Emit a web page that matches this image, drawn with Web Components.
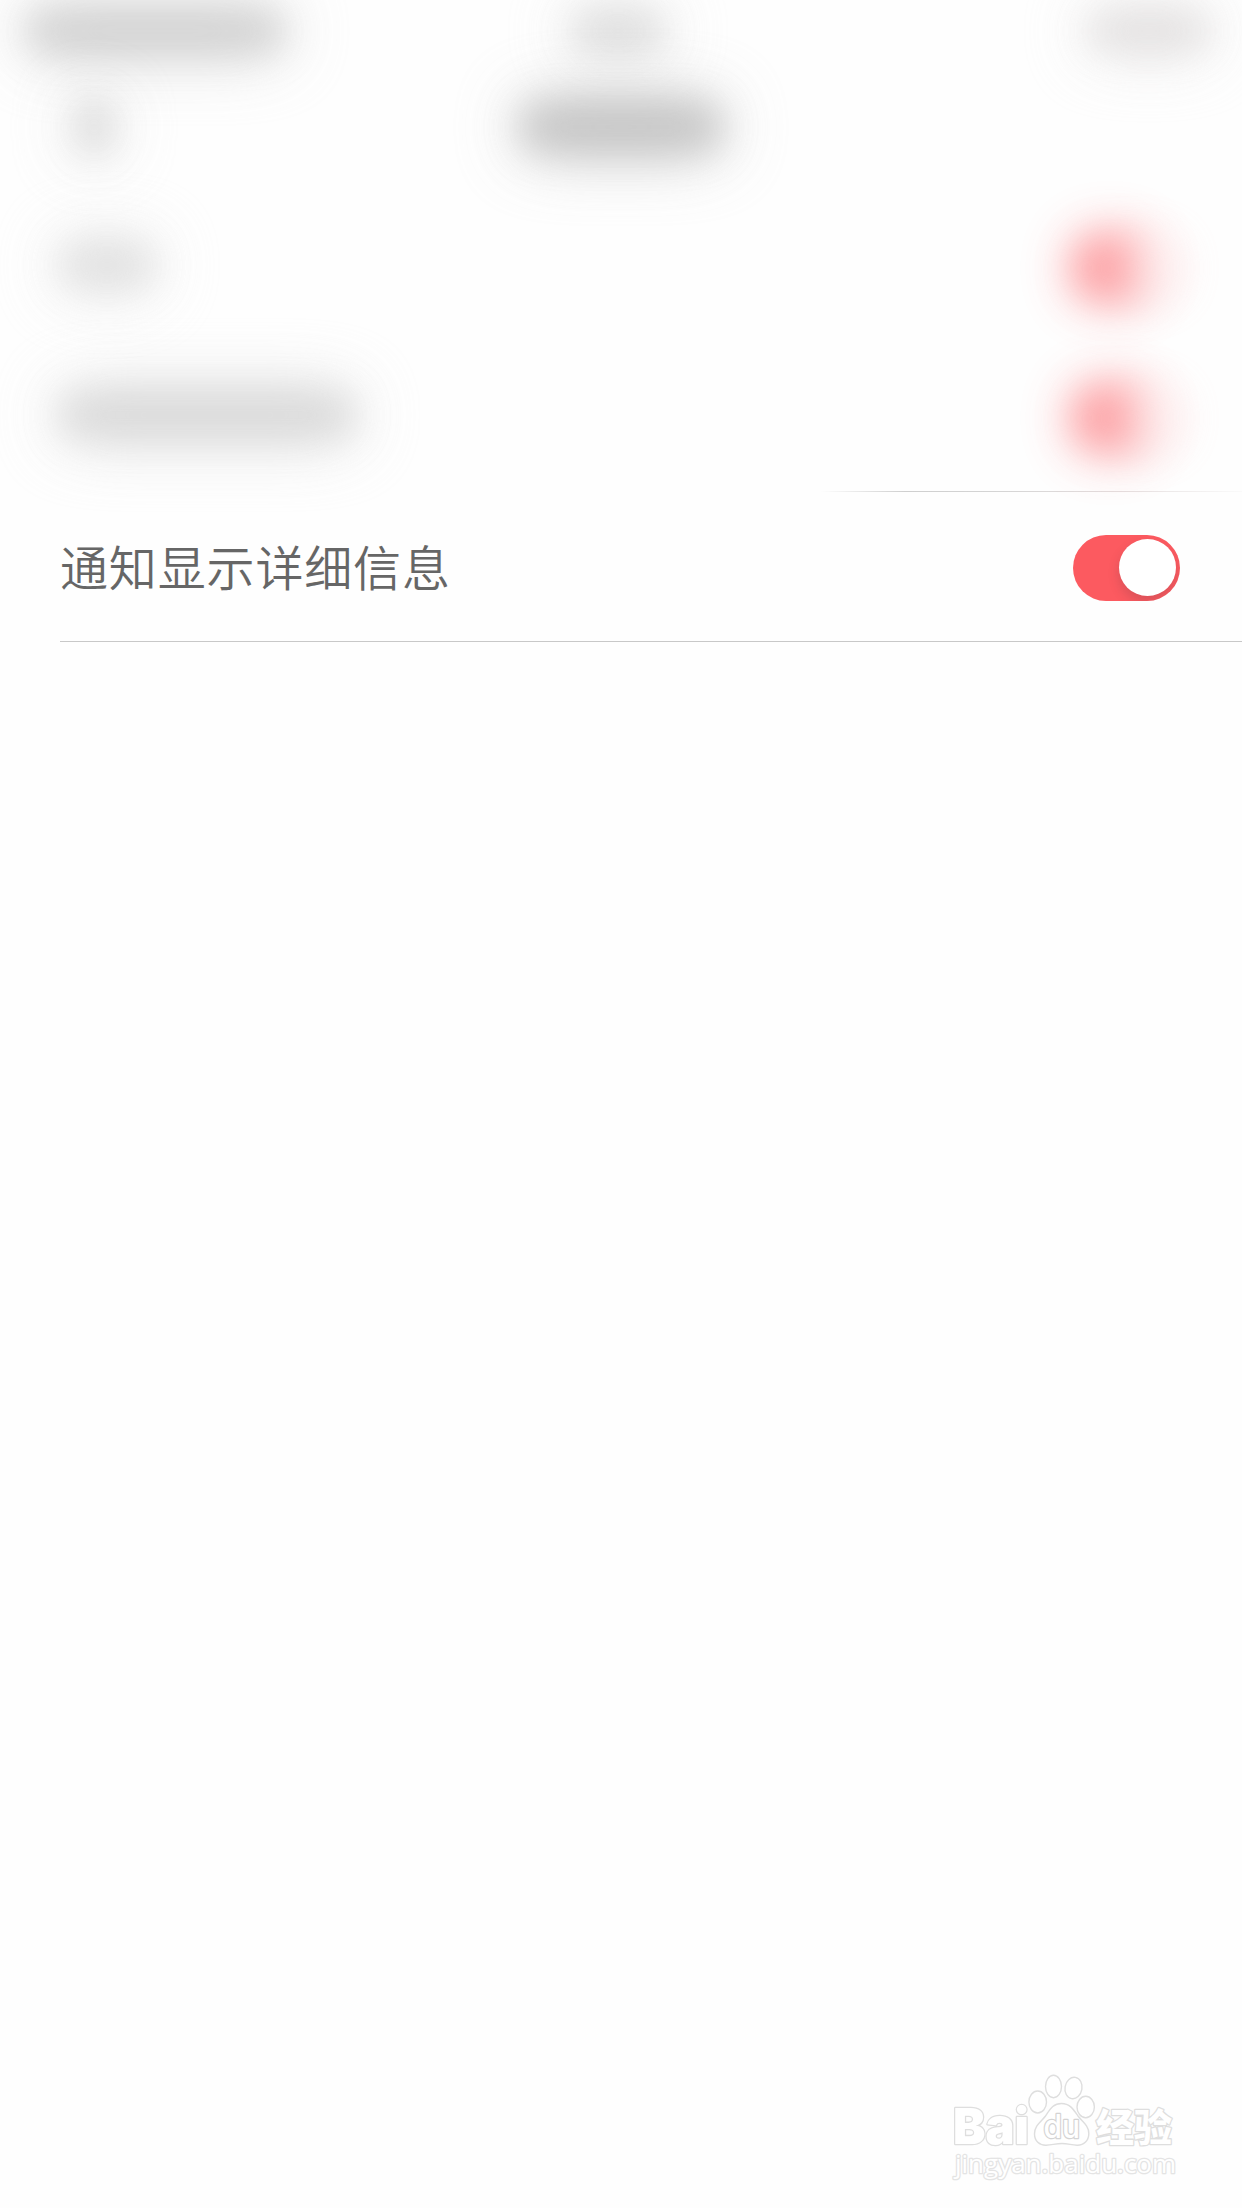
<!DOCTYPE html>
<html lang="zh-CN">
<head>
<meta charset="UTF-8">
<title>通知显示详细信息</title>
<style>
    body {
        margin: 0;
        background: #fefefe;
        font-family: "Noto Sans CJK SC", sans-serif;
    }
</style>
</head>
<body>
<settings-page></settings-page>

<script>
// Soft placeholder for content that is out of focus
class BlurBlock extends HTMLElement {
    constructor() {
        super();
        this.attachShadow({ mode: 'open' });
    }

    connectedCallback() {
        const width = this.getAttribute('width');
        const height = this.getAttribute('height');
        const color = this.getAttribute('color');

        this.shadowRoot.innerHTML = `
            <style>
                :host {
                    display: grid;
                    flex: none;
                    width: ${width}px;
                    height: ${height}px;
                }

                div {
                    grid-area: 1 / 1;
                    border-radius: 20px;
                    background: ${color};
                    filter: blur(18px);
                    opacity: 0.62;
                }

                .halo {
                    filter: blur(34px);
                    opacity: 0.8;
                }
            </style>
            <div class="halo"></div>
            <div></div>
        `;
    }
}

class ToggleSwitch extends HTMLElement {
    constructor() {
        super();
        this.attachShadow({ mode: 'open' });
    }

    connectedCallback() {
        this.shadowRoot.innerHTML = `
            <style>
                :host {
                    display: grid;
                    flex: none;
                    padding-top: 2px;
                }

                .track {
                    grid-area: 1 / 1;
                    box-sizing: border-box;
                    width: 107px;
                    height: 66px;
                    padding: 4.5px 4px;
                    border-radius: 33px;
                    background: #fc5a60;
                    overflow: hidden;
                    display: flex;
                    justify-content: flex-end;
                }

                .knob {
                    width: 57px;
                    height: 57px;
                    border-radius: 50%;
                    background: #fff;
                    box-shadow: 0 6px 12px rgba(80, 50, 60, 0.2);
                }

                .halo {
                    grid-area: 1 / 1;
                    display: none;
                }

                :host([blurred]) .track {
                    filter: blur(20px);
                    opacity: 0.42;
                }

                :host([blurred]) .halo {
                    display: block;
                    width: 74px;
                    height: 66px;
                    border-radius: 33px;
                    background: #fc5a60;
                    filter: blur(28px);
                    opacity: 0.46;
                }
            </style>
            <div class="track"><div class="knob"></div></div>
            <div class="halo"></div>
        `;
    }
}

class StatusBar extends HTMLElement {
    constructor() {
        super();
        this.attachShadow({ mode: 'open' });
        this.shadowRoot.innerHTML = `
            <style>
                :host {
                    display: grid;
                    grid-template-columns: 1fr auto 1fr;
                    align-items: center;
                    height: 62px;
                    padding: 0 32px 0 26px;
                }

                .end {
                    justify-self: end;
                }
            </style>
            <blur-block width="258" height="40" color="#c4c4c4"></blur-block>
            <blur-block width="92" height="34" color="#d0d0d0"></blur-block>
            <blur-block class="end" width="122" height="34" color="#d9d6d6"></blur-block>
        `;
    }
}

class NavBar extends HTMLElement {
    constructor() {
        super();
        this.attachShadow({ mode: 'open' });
        this.shadowRoot.innerHTML = `
            <style>
                :host {
                    display: grid;
                    grid-template-columns: 1fr auto 1fr;
                    align-items: center;
                    height: 130px;
                    padding: 0 80px;
                }
            </style>
            <blur-block width="28" height="54" color="#c4c4c4"></blur-block>
            <blur-block width="200" height="48" color="#b8b8b8"></blur-block>
        `;
    }
}

class SettingsRow extends HTMLElement {
    constructor() {
        super();
        this.attachShadow({ mode: 'open' });
        this.shadowRoot.innerHTML = `
            <style>
                :host {
                    display: block;
                    height: 150px;
                    padding-left: 60px;
                }

                .row {
                    box-sizing: border-box;
                    height: 150px;
                    padding-right: 62px;
                    display: flex;
                    align-items: center;
                    justify-content: space-between;
                    color: #666;
                    font-size: 48px;
                    font-weight: 350;
                    letter-spacing: 0.85px;
                    line-height: 70px;
                    border-bottom: 1px solid transparent;
                }

                .label {
                    padding-bottom: 4px;
                }

                :host([line="full"]) .row {
                    border-bottom-color: #c8c8c8;
                }

                :host([line="part"]) .row {
                    background: linear-gradient(90deg, transparent 760px, #cfcfcf 845px, #d4d4d4 930px, #e4dede 1060px, #fafafa 1182px) 0 100% / 100% 1px no-repeat border-box;
                }
            </style>
            <div class="row">
                <div class="label"><slot></slot></div>
                <slot name="control"></slot>
            </div>
        `;
    }
}

class JingyanMark extends HTMLElement {
    constructor() {
        super();
        this.attachShadow({ mode: 'open' });
        this.shadowRoot.innerHTML = `
            <style>
                :host {
                    position: absolute;
                    left: 930px;
                    top: 2050px;
                }

                svg {
                    display: block;
                    fill: #fff;
                    stroke: #dedede;
                    stroke-width: 1.4;
                }

                text {
                    paint-order: stroke;
                    stroke-width: 2.6;
                    stroke-linejoin: round;
                }

                .brand {
                    font: 900 50px Inter, sans-serif;
                }

                .du {
                    font: 500 32px Inter, sans-serif;
                    stroke: #d4d4d4;
                }

                .name {
                    font: 900 38px "Noto Sans CJK SC", sans-serif;
                }

                .url {
                    font: 400 26px "Open Sans", sans-serif;
                    stroke: #e4e4e4;
                }
            </style>
            <svg width="270" height="158" viewBox="0 0 270 158">
                <ellipse cx="107.700" cy="52" rx="8.800" ry="11"/>
                <ellipse cx="123.500" cy="36.500" rx="8" ry="11.200"/>
                <ellipse cx="143.500" cy="38" rx="8.500" ry="10.800" transform="rotate(10 143.500 38)"/>
                <ellipse cx="155.700" cy="57" rx="8.700" ry="10.700"/>
                <path d="M131.500 53.500C123 53.500 120 59.500 115.500 66C111.500 71.500 104.500 75 104.500 84C104.500 91 109.500 95.500 116 95.300C122 95 126 93.500 132 93.500C138 93.500 141 95 147 95.300C154 95.500 158.800 90.500 158.800 83.500C158.800 75 152 71.500 148 66C143.500 59.500 140 53.500 131.500 53.500Z"/>
                <text class="brand" x="23" y="93.500" textLength="76" lengthAdjust="spacingAndGlyphs">Bai</text>
                <text class="du" x="113.500" y="88" textLength="36.500" lengthAdjust="spacingAndGlyphs">du</text>
                <text class="name" x="166" y="91" textLength="76" lengthAdjust="spacingAndGlyphs">经验</text>
                <text class="url" x="25" y="123" textLength="221" lengthAdjust="spacingAndGlyphs">jingyan.baidu.com</text>
            </svg>
        `;
    }
}

class SettingsPage extends HTMLElement {
    constructor() {
        super();
        this.attachShadow({ mode: 'open' });
        this.shadowRoot.innerHTML = `
            <style>
                :host {
                    display: block;
                    position: relative;
                    width: 1242px;
                    height: 2208px;
                    overflow: hidden;
                }
            </style>
            <status-bar></status-bar>
            <nav-bar></nav-bar>
            <settings-row>
                <blur-block width="94" height="42" color="#d8d8d8"></blur-block>
                <toggle-switch slot="control" blurred></toggle-switch>
            </settings-row>
            <settings-row line="part">
                <blur-block width="294" height="44" color="#d0d0d0"></blur-block>
                <toggle-switch slot="control" blurred></toggle-switch>
            </settings-row>
            <settings-row line="full">
                通知显示详细信息
                <toggle-switch slot="control"></toggle-switch>
            </settings-row>
            <jingyan-mark></jingyan-mark>
        `;
    }
}

customElements.define('blur-block', BlurBlock);
customElements.define('toggle-switch', ToggleSwitch);
customElements.define('status-bar', StatusBar);
customElements.define('nav-bar', NavBar);
customElements.define('settings-row', SettingsRow);
customElements.define('jingyan-mark', JingyanMark);
customElements.define('settings-page', SettingsPage);
</script>
</body>
</html>
